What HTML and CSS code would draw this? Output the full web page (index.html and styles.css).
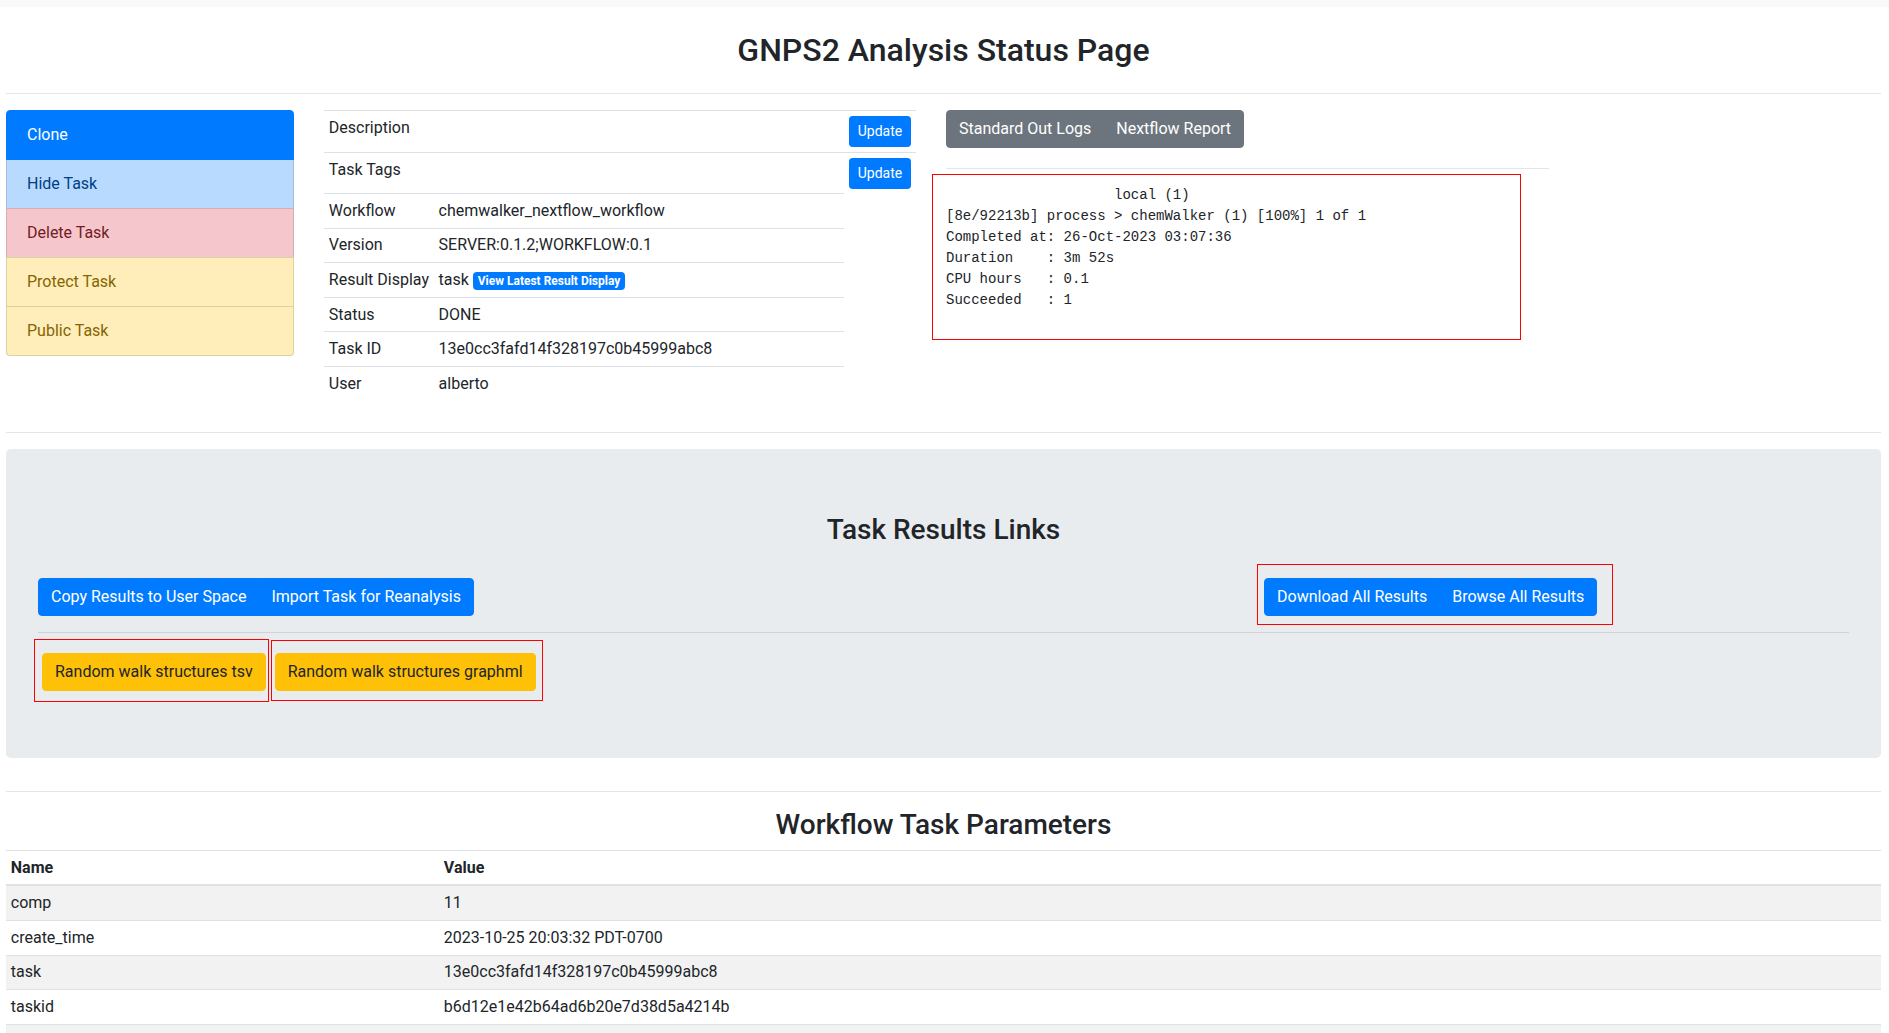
FILE: index.html
```html
<!DOCTYPE html>
<html lang="en">
<head>
<meta charset="utf-8">
<title>GNPS2 Analysis Status Page</title>
<link rel="stylesheet" href="styles.css">
</head>
<body>
<div class="topbar"></div>
<div class="page">
  <h2 class="page-title">GNPS2 Analysis Status Page</h2>
  <hr class="rule rule-top">

  <div class="status-grid">
    <div class="list-group">
      <a class="lg-item lg-active">Clone</a>
      <a class="lg-item lg-primary">Hide Task</a>
      <a class="lg-item lg-danger">Delete Task</a>
      <a class="lg-item lg-warning">Protect Task</a>
      <a class="lg-item lg-warning lg-last">Public Task</a>
    </div>

    <table class="info-table">
      <tr><td class="lbl">Description</td><td></td><td class="act"><button class="btn btn-sm btn-primary">Update</button></td></tr>
      <tr><td class="lbl">Task Tags</td><td></td><td class="act"><button class="btn btn-sm btn-primary">Update</button></td></tr>
      <tr><td class="lbl">Workflow</td><td>chemwalker_nextflow_workflow</td></tr>
      <tr><td class="lbl">Version</td><td>SERVER:0.1.2;WORKFLOW:0.1</td></tr>
      <tr><td class="lbl">Result Display</td><td>task <span class="badge">View Latest Result Display</span></td></tr>
      <tr><td class="lbl">Status</td><td>DONE</td></tr>
      <tr><td class="lbl">Task ID</td><td>13e0cc3fafd14f328197c0b45999abc8</td></tr>
      <tr><td class="lbl">User</td><td>alberto</td></tr>
    </table>

    <div class="logs">
      <div class="btn-group">
        <button class="btn btn-secondary">Standard Out Logs</button>
        <button class="btn btn-secondary">Nextflow Report</button>
      </div>
      <hr class="rule rule-logs">
      <div class="log-box"><pre class="log-pre">                    local (1)
[8e/92213b] process &gt; chemWalker (1) [100%] 1 of 1
Completed at: 26-Oct-2023 03:07:36
Duration    : 3m 52s
CPU hours   : 0.1
Succeeded   : 1</pre></div>
    </div>
  </div>

  <hr class="rule rule-mid">

  <div class="panel">
    <h3 class="section-title">Task Results Links</h3>
    <div class="actions">
      <div class="btn-group">
        <button class="btn btn-primary">Copy Results to User Space</button>
        <button class="btn btn-primary">Import Task for Reanalysis</button>
      </div>
      <div class="actions-right">
        <div class="hl hl-download">
          <div class="btn-group">
            <button class="btn btn-primary">Download All Results</button>
            <button class="btn btn-primary">Browse All Results</button>
          </div>
        </div>
      </div>
    </div>
    <hr class="rule rule-panel">
    <div class="files">
      <div class="hl hl-tsv"><button class="btn btn-warning">Random walk structures tsv</button></div>
      <div class="hl hl-graphml"><button class="btn btn-warning">Random walk structures graphml</button></div>
    </div>
  </div>

  <hr class="rule rule-bottom">
  <h3 class="section-title params-title">Workflow Task Parameters</h3>
  <table class="params">
    <thead>
      <tr><th class="p-name">Name</th><th>Value</th></tr>
    </thead>
    <tbody>
      <tr><td>comp</td><td>11</td></tr>
      <tr><td>create_time</td><td>2023-10-25 20:03:32 PDT-0700</td></tr>
      <tr><td>task</td><td>13e0cc3fafd14f328197c0b45999abc8</td></tr>
      <tr><td>taskid</td><td>b6d12e1e42b64ad6b20e7d38d5a4214b</td></tr>
      <tr><td>&nbsp;</td><td>&nbsp;</td></tr>
    </tbody>
  </table>
</div>
</body>
</html>
```
FILE: styles.css
```css
* { box-sizing: border-box; }
html, body { margin: 0; }
body {
  font-family: Roboto, "Liberation Sans", Arial, sans-serif;
  font-size: 16px;
  line-height: 1.5;
  color: #212529;
  background: #fff;
}
.topbar { height: 7px; background: #f8f9fa; }
.page { padding: 0 8px 0 6px; }

.page-title, .section-title {
  margin: 0;
  text-align: center;
  font-weight: 500;
  line-height: 1.2;
}
.page-title { font-size: 32px; margin-top: 24px; }
.section-title { font-size: 28px; }

.rule { border: 0; border-top: 1px solid rgba(0,0,0,.1); margin: 0; }
.rule-top { margin-top: 24px; margin-bottom: 16px; }
.rule-mid { margin-top: 31px; margin-bottom: 16px; }
.rule-bottom { margin-top: 33px; margin-bottom: 16px; }

.status-grid {
  display: grid;
  grid-template-columns: 288px 592px 605px;
  column-gap: 30px;
  align-items: start;
}

/* list group */
.list-group { display: flex; flex-direction: column; }
.lg-item {
  display: block;
  padding: 12px 20px;
  border: 1px solid rgba(0,0,0,.125);
  margin-bottom: -1px;
  line-height: 24px;
}
.lg-active {
  background: #007bff; border-color: #007bff; color: #fff;
  border-top-left-radius: 4px; border-top-right-radius: 4px;
  position: relative; z-index: 1;
}
.lg-primary { background: #b8daff; color: #004085; }
.lg-danger { background: #f5c6cb; color: #721c24; }
.lg-warning { background: #ffeeba; color: #856404; }
.lg-last { margin-bottom: 0; border-bottom-left-radius: 4px; border-bottom-right-radius: 4px; }

/* info table */
.info-table { width: 100%; border-collapse: collapse; }
.info-table td {
  padding: 4.8px;
  border-top: 1px solid #dee2e6;
  vertical-align: top;
}
.info-table .lbl { width: 1%; white-space: nowrap; }
.info-table .act { width: 1%; }

.btn {
  display: inline-block;
  font-family: inherit;
  font-size: 16px;
  line-height: 24px;
  padding: 6px 12px;
  border: 1px solid transparent;
  border-radius: 4px;
  margin: 0;
  cursor: pointer;
  white-space: nowrap;
}
.btn-sm { font-size: 14px; line-height: 21px; padding: 4px 8px; border-radius: 3.2px; }
.btn-primary { background: #007bff; border-color: #007bff; color: #fff; }
.btn-secondary { background: #6c757d; border-color: #6c757d; color: #fff; }
.btn-warning { background: #ffc107; border-color: #ffc107; color: #212529; }

.btn-group { display: inline-flex; vertical-align: middle; }
.btn-group .btn + .btn { margin-left: -1px; }
.btn-group .btn:not(:last-child) { border-top-right-radius: 0; border-bottom-right-radius: 0; }
.btn-group .btn:not(:first-child) { border-top-left-radius: 0; border-bottom-left-radius: 0; }

.badge {
  display: inline-block;
  font-size: 12px;
  font-weight: 700;
  line-height: 1;
  padding: 3px 4.8px;
  border-radius: 4px;
  background: #007bff;
  color: #fff;
  vertical-align: baseline;
  white-space: nowrap;
}

/* logs */
.logs { display: flex; flex-direction: column; align-items: flex-start; }
.rule-logs { width: 603px; margin-top: 20px; margin-bottom: 5px; }
.log-box {
  width: 589px;
  margin-left: -14px;
  border: 1px solid red;
  padding: 10px 13px 12px 13px;
}
.log-pre {
  margin: 0 0 16px 0;
  font-family: "Liberation Mono", "DejaVu Sans Mono", monospace;
  font-size: 14px;
  line-height: 21px;
  color: #212529;
}

/* panel */
.panel {
  background: #e9ecef;
  border-radius: 4.8px;
  padding: 64px 32px 56px 32px;
}
.panel .section-title { margin-bottom: 32px; }
.actions { display: flex; justify-content: space-between; align-items: flex-start; }
.actions-right { width: 584px; }
.hl { border: 1px solid red; display: inline-block; }
.hl-download { padding: 13px 15px 8px 6px; margin: -14px 0 -9px -8px; }
.rule-panel { margin-top: 16px; }
.files { display: flex; align-items: flex-start; margin-top: 6px; }
.hl-tsv { padding: 13px 2px 10px 7px; margin-left: -4px; }
.hl-graphml { padding: 12px 6px 9px 3px; margin-left: 2px; margin-top: 1px; }

/* params */
.params-title { margin-bottom: 8px; }
.params { width: 100%; border-collapse: collapse; }
.params th, .params td {
  padding: 4.8px;
  text-align: left;
  border-top: 1px solid #dee2e6;
  vertical-align: top;
}
.params th { font-weight: 700; }
.params thead th { border-bottom: 2px solid #dee2e6; }
.params .p-name { width: 433px; }
.params tbody tr:nth-child(odd) { background: rgba(0,0,0,.05); }
```
